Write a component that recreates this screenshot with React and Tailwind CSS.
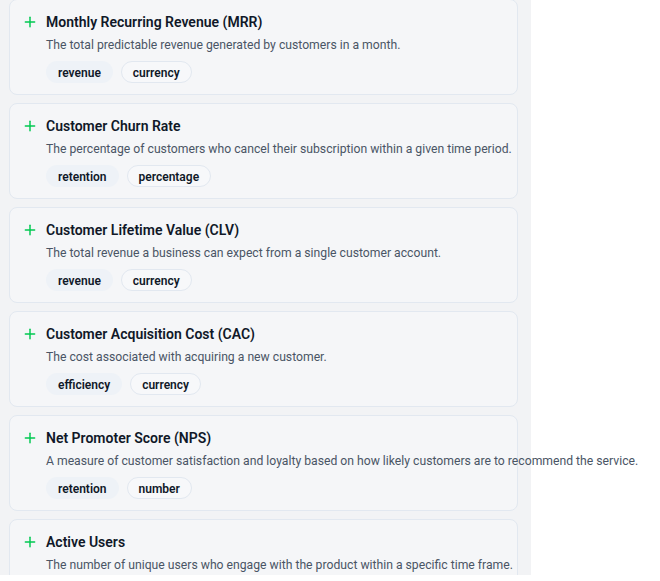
import { Plus } from "lucide-react";

const metrics = [
  {
    name: "Monthly Recurring Revenue (MRR)",
    description: "The total predictable revenue generated by customers in a month.",
    tags: ["revenue", "currency"],
  },
  {
    name: "Customer Churn Rate",
    description: "The percentage of customers who cancel their subscription within a given time period.",
    tags: ["retention", "percentage"],
  },
  {
    name: "Customer Lifetime Value (CLV)",
    description: "The total revenue a business can expect from a single customer account.",
    tags: ["revenue", "currency"],
  },
  {
    name: "Customer Acquisition Cost (CAC)",
    description: "The cost associated with acquiring a new customer.",
    tags: ["efficiency", "currency"],
  },
  {
    name: "Net Promoter Score (NPS)",
    description:
      "A measure of customer satisfaction and loyalty based on how likely customers are to recommend the service.",
    tags: ["retention", "number"],
  },
  {
    // last card runs off the bottom of the panel, its tags are never visible
    name: "Active Users",
    description: "The number of unique users who engage with the product within a specific time frame.",
    tags: [],
  },
];

function Tag({ label, outlined }) {
  return (
    <span
      className={`h-[22px] inline-flex items-center rounded-full border px-[11px] pt-px text-[12px] leading-4 font-semibold text-gray-900 ${
        outlined ? "border-slate-200 bg-[#f7f8fa]" : "border-transparent bg-[#eef2f7]"
      }`}
    >
      {label}
    </span>
  );
}

function MetricCard({ metric }) {
  return (
    <div className="h-[96px] rounded-lg border border-slate-200 bg-[#f5f6f8] px-3 pt-3 shrink-0 overflow-visible">
      <div className="flex items-center gap-2 h-5">
        <Plus size={16} strokeWidth={2.2} className="text-green-500 shrink-0" />
        <span className="text-[14px] font-semibold text-gray-900 whitespace-nowrap">{metric.name}</span>
      </div>
      <p className="mt-1 pl-6 text-[12.2px] leading-[18px] text-gray-600 whitespace-nowrap">
        {metric.description}
      </p>
      {metric.tags.length > 0 && (
        <div className="mt-[7px] pl-6 flex gap-2">
          {metric.tags.map((t, i) => (
            <Tag key={t} label={t} outlined={i === 1} />
          ))}
        </div>
      )}
    </div>
  );
}

export default function App() {
  return (
    <div className="h-[575px] w-full overflow-hidden bg-white" style={{ fontFamily: "Roboto, sans-serif" }}>
      <div className="w-[531px] min-h-full bg-[#f2f3f5] pl-[9px] pr-[13px]">
        <div className="-mt-px flex flex-col gap-2">
          {metrics.map((m) => (
            <MetricCard key={m.name} metric={m} />
          ))}
        </div>
      </div>
    </div>
  );
}
